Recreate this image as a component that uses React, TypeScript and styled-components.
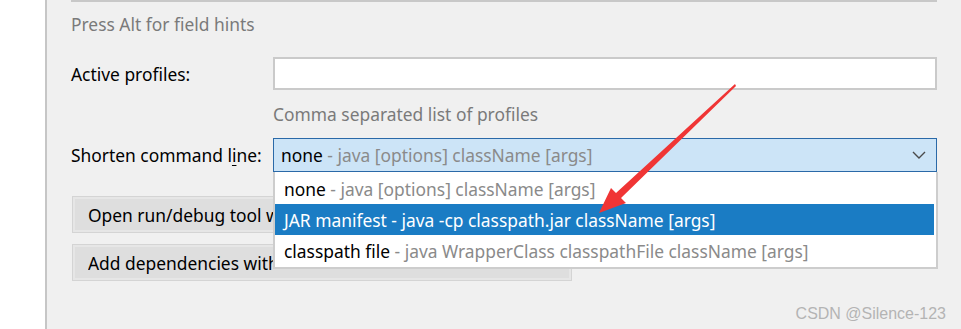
import React from "react";
import styled, { createGlobalStyle } from "styled-components";

const Global = createGlobalStyle`
  html, body { margin: 0; padding: 0; background: #ffffff; }
  body { width: 961px; height: 329px; overflow: hidden; }
  #root { width: 961px; height: 329px; }
`;

const Page = styled.div`
  display: flex;
  width: 961px;
  height: 329px;
  font-family: "Noto Sans", "Open Sans", sans-serif;
  font-size: 17.4px;
  position: relative;
`;

const Gutter = styled.div`
  width: 45px;
  background: #ffffff;
  border-right: 2px solid #c6c6c6;
`;

const Panel = styled.div`
  flex: 1;
  background: #f0f0f0;
  padding: 0 23px 0 24px;
  display: flex;
  flex-direction: column;
  position: relative;
`;

const TopRule = styled.div`
  height: 2px;
  width: 866px;
  background: #c8c8c8;
`;

const Hint = styled.div<{ $indent?: number; $top: number }>`
  color: #7a7a7a;
  line-height: 22px;
  padding-left: ${(p) => p.$indent ?? 0}px;
  margin-top: ${(p) => p.$top}px;
`;

const Row = styled.div<{ $top: number }>`
  display: flex;
  align-items: center;
  margin-top: ${(p) => p.$top}px;
`;

const Label = styled.div`
  width: 202px;
  color: #000;
  line-height: 22px;
`;

const TextInput = styled.div`
  width: 660px;
  height: 29px;
  background: #fff;
  border: 2px solid #cacaca;
`;

const Combo = styled.div`
  width: 664px;
  height: 34px;
  box-sizing: border-box;
  background: #cce4f7;
  border: 1px solid #2a69a8;
  display: flex;
  align-items: center;
  padding: 0 8px 0 7px;
`;

const Main = styled.span`
  color: #000;
`;
const Dim = styled.span`
  color: #8a8a8a;
`;

const Chevron = styled.svg`
  margin-left: auto;
  margin-right: 2px;
`;

const ComboWrap = styled.div`
  position: relative;
`;

const List = styled.div`
  position: absolute;
  left: 0;
  top: 34px;
  width: 665px;
  box-sizing: border-box;
  background: #fff;
  border: 2px solid #cdcdcd;
  border-top: none;
  padding: 1px 2px 1px 0;
  z-index: 2;
  display: flex;
  flex-direction: column;
`;

const Item = styled.div<{ $sel?: boolean }>`
  height: 31px;
  display: flex;
  align-items: center;
  padding-left: 9px;
  background: ${(p) => (p.$sel ? "#1a7cc4" : "transparent")};
  color: ${(p) => (p.$sel ? "#fff" : "#000")};
  white-space: nowrap;
`;

const Button = styled.div<{ $top: number }>`
  width: 498px;
  height: 35px;
  box-sizing: border-box;
  margin: ${(p) => p.$top}px 0 0 2px;
  background: #dedede;
  border: 2px solid #e6e6e6;
  outline: 1px solid #d4d4d4;
  display: flex;
  align-items: center;
  padding-left: 13px;
  color: #000;
`;

const ButtonText = styled.span`
  display: block;
  max-width: 185px;
  overflow: hidden;
  white-space: nowrap;
`;

const U = styled.span`
  text-decoration: underline;
  text-underline-offset: 3px;
`;

const Watermark = styled.div`
  position: absolute;
  right: 15px;
  bottom: 5px;
  color: #b4b4b4;
  font-family: "Liberation Sans", Arial, sans-serif;
  font-size: 17px;
  transform: scaleX(0.94);
  transform-origin: right center;
  white-space: nowrap;
`;

const Arrow = styled.svg`
  position: absolute;
  left: 0;
  top: 0;
  pointer-events: none;
  z-index: 5;
`;

export default function App() {
  return (
    <>
      <Global />
      <Page>
        <Gutter />
        <Panel>
          <TopRule />
          <Hint $top={11}>Press Alt for field hints</Hint>
          <Row $top={22}>
            <Label>Active profiles:</Label>
            <TextInput />
          </Row>
          <Hint $indent={202} $top={13}>
            Comma separated list of profiles
          </Hint>
          <Row $top={13}>
            <Label>
              Shorten command l<U>i</U>ne:
            </Label>
            <ComboWrap>
              <Combo>
                <Main>none</Main>
                <Dim>&nbsp;- java [options] className [args]</Dim>
                <Chevron width="14" height="8" viewBox="0 0 14 8">
                  <path d="M1 1 L7 7 L13 1" fill="none" stroke="#4a4a4a" strokeWidth="1.4" />
                </Chevron>
              </Combo>
              <List>
                <Item>
                  <Main>none</Main>
                  <Dim>&nbsp;- java [options] className [args]</Dim>
                </Item>
                <Item $sel>JAR manifest - java -cp classpath.jar className [args]</Item>
                <Item>
                  <Main>classpath file</Main>
                  <Dim>&nbsp;- java WrapperClass classpathFile className [args]</Dim>
                </Item>
              </List>
            </ComboWrap>
          </Row>
          <Button $top={25}>
            <ButtonText>Open run/debug tool window when started</ButtonText>
          </Button>
          <Button $top={13}>
            <ButtonText>Add dependencies with "provided" scope to classpath</ButtonText>
          </Button>
          <Watermark>CSDN @Silence-123</Watermark>
        </Panel>
        <Arrow width="961" height="329" viewBox="0 0 961 329">
          <polygon points="735,84 736,86 621,198 626,203 599,213 611,188 616,193" fill="#f03535" />
        </Arrow>
      </Page>
    </>
  );
}
